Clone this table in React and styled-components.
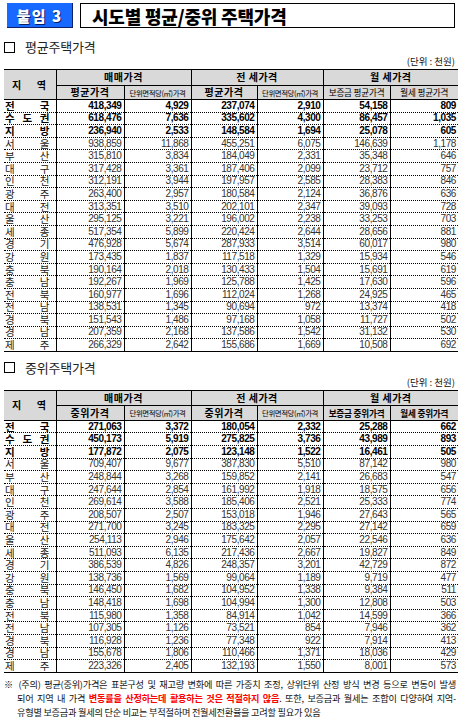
import styled, { createGlobalStyle } from "styled-components";

const GlobalStyle = createGlobalStyle`
  html, body { margin: 0; padding: 0; background: #fff; }
  body {
    font-family: "Liberation Sans", "Noto Sans CJK KR", sans-serif;
    color: #000;
  }
`;

const avgRows = [
  ["전국", "418,349", "4,929", "237,074", "2,910", "54,158", "809"],
  ["수도권", "618,476", "7,636", "335,602", "4,300", "86,457", "1,035"],
  ["지방", "236,940", "2,533", "148,584", "1,694", "25,078", "605"],
  ["서울", "938,859", "11,868", "455,251", "6,075", "146,639", "1,178"],
  ["부산", "315,810", "3,834", "184,049", "2,331", "35,348", "646"],
  ["대구", "317,428", "3,361", "187,406", "2,099", "23,712", "757"],
  ["인천", "312,191", "3,944", "197,957", "2,585", "28,383", "846"],
  ["광주", "263,400", "2,957", "180,584", "2,124", "36,876", "636"],
  ["대전", "313,351", "3,510", "202,101", "2,347", "39,093", "728"],
  ["울산", "295,125", "3,221", "196,002", "2,238", "33,253", "703"],
  ["세종", "517,354", "5,899", "220,424", "2,644", "28,656", "881"],
  ["경기", "476,928", "5,674", "287,933", "3,514", "60,017", "980"],
  ["강원", "173,435", "1,837", "117,518", "1,329", "15,934", "546"],
  ["충북", "190,164", "2,018", "130,433", "1,504", "15,691", "619"],
  ["충남", "192,267", "1,969", "125,788", "1,425", "17,630", "596"],
  ["전북", "160,977", "1,696", "112,024", "1,268", "24,925", "465"],
  ["전남", "138,531", "1,345", "90,694", "972", "13,374", "418"],
  ["경북", "151,543", "1,486", "97,168", "1,058", "11,727", "502"],
  ["경남", "207,359", "2,168", "137,586", "1,542", "31,132", "530"],
  ["제주", "266,329", "2,642", "155,686", "1,669", "10,508", "692"],
];

const medRows = [
  ["전국", "271,063", "3,372", "180,054", "2,332", "25,288", "662"],
  ["수도권", "450,173", "5,919", "275,825", "3,736", "43,989", "893"],
  ["지방", "177,872", "2,075", "123,148", "1,522", "16,461", "505"],
  ["서울", "709,407", "9,677", "387,830", "5,510", "87,142", "980"],
  ["부산", "248,844", "3,268", "159,852", "2,141", "26,683", "547"],
  ["대구", "247,644", "2,854", "161,992", "1,918", "18,575", "656"],
  ["인천", "269,614", "3,588", "185,406", "2,521", "25,333", "774"],
  ["광주", "208,507", "2,507", "153,018", "1,946", "27,643", "565"],
  ["대전", "271,700", "3,245", "183,325", "2,295", "27,142", "659"],
  ["울산", "254,113", "2,946", "175,642", "2,057", "22,546", "636"],
  ["세종", "511,093", "6,135", "217,436", "2,667", "19,827", "849"],
  ["경기", "386,539", "4,826", "248,357", "3,201", "42,729", "872"],
  ["강원", "138,736", "1,569", "99,064", "1,189", "9,719", "477"],
  ["충북", "146,450", "1,682", "104,952", "1,338", "9,384", "511"],
  ["충남", "148,418", "1,698", "104,994", "1,300", "12,808", "503"],
  ["전북", "115,980", "1,358", "84,914", "1,042", "14,599", "366"],
  ["전남", "107,305", "1,126", "73,521", "854", "7,946", "362"],
  ["경북", "116,928", "1,236", "77,348", "922", "7,914", "413"],
  ["경남", "155,678", "1,806", "110,466", "1,371", "18,036", "429"],
  ["제주", "223,326", "2,405", "132,193", "1,550", "8,001", "573"],
];

const colWidths = [52, 68, 67, 66, 66, 67, 68];

// layout
const Page = styled.div`
  width: 462px;
  height: 724px;
  box-sizing: border-box;
  padding: 3px 4px 0 4px;
  overflow: hidden;
`;

const TitleBar = styled.div`
  display: flex;
  gap: 7px;
  height: 25px;
  padding: 0 3px 0 3px;
`;

const Badge = styled.div`
  width: 66px;
  box-sizing: border-box;
  background: #1769ff;
  border-right: 1px solid #10206a;
  border-bottom: 1px solid #10206a;
  display: flex;
  align-items: center;
  justify-content: center;
  color: #fff;
  font-family: "Noto Sans CJK KR", sans-serif;
  font-weight: 900;
  font-size: 15px;
  letter-spacing: 1.5px;
  text-shadow: 1px 1px 0 #0b1f66;
`;

const TitleBox = styled.div`
  flex: 1;
  box-sizing: border-box;
  border: 1.5px solid #000;
  display: flex;
  align-items: center;
  padding-left: 11px;
  font-family: "Noto Sans CJK KR", sans-serif;
  font-weight: 900;
  font-size: 18px;
  letter-spacing: -0.2px;
  line-height: 1;
`;

const Section = styled.div`
  display: flex;
  align-items: center;
  gap: 10px;
  height: 16px;
  margin-top: ${(p) => p.$top}px;
`;

const Check = styled.span`
  width: 11px;
  height: 11px;
  box-sizing: border-box;
  border: 1.3px solid #000;
`;

const SectionTitle = styled.span`
  font-family: "Noto Sans CJK KR", sans-serif;
  font-size: 13px;
  color: #222;
  line-height: 16px;
  letter-spacing: -0.2px;
`;

const Unit = styled.div`
  text-align: right;
  font-family: "Noto Sans CJK KR", sans-serif;
  font-size: 9.5px;
  line-height: 11px;
  height: 11px;
  padding-right: 3px;
  margin-top: 1px;
  color: #111;
`;

const Table = styled.table`
  width: 454px;
  table-layout: fixed;
  border-collapse: collapse;
  margin-top: 2px;
  border-top: 1.5px solid #000;
  border-bottom: 1.5px solid #000;
`;

const Col = styled.col`
  width: ${(p) => p.$w}px;
`;

const HeadCell = styled.th`
  background: #d9d9d9;
  padding: 0;
  height: ${(p) => p.$h}px;
  border-bottom: 1px solid #000;
  border-left: ${(p) => (p.$first ? "none" : "1px solid #000")};
  font-family: "Noto Sans CJK KR", sans-serif;
  font-weight: ${(p) => (p.$light ? 400 : 700)};
  font-size: ${(p) => p.$size || 10}px;
  letter-spacing: ${(p) => p.$ls ?? 0.5}px;
  line-height: 1;
  white-space: nowrap;
  overflow: hidden;
  text-align: center;
  vertical-align: middle;
`;

const Spread = styled.div`
  display: flex;
  align-items: center;
  justify-content: space-between;
  height: ${(p) => p.$h || 10}px;
  padding: ${(p) => p.$pad};
  & > span {
    line-height: 10px;
  }
`;

const Row = styled.tr`
  height: 12.6px;
  & > td {
    border-bottom: 1px dotted #000;
  }
  &:last-child > td {
    border-bottom: none;
  }
`;

const RegionCell = styled.td`
  padding: 0;
  font-family: "Noto Sans CJK KR", sans-serif;
  font-size: 10.5px;
  line-height: 10px;
  font-weight: ${(p) => (p.$bold ? 700 : 400)};
  color: ${(p) => (p.$bold ? "#000" : "#222")};
`;

const NumCell = styled.td`
  padding: 0 2px 0 0;
  border-left: 1px solid #000;
  text-align: right;
  font-size: 10px;
  line-height: 10px;
  letter-spacing: -0.4px;
  font-weight: ${(p) => (p.$bold ? 700 : 400)};
  color: ${(p) => (p.$bold ? "#000" : "#333")};
`;

const Notes = styled.div`
  margin-top: 4px;
  font-family: "Noto Sans CJK KR", sans-serif;
  font-size: 9.2px;
  line-height: 14px;
  color: #111;
  letter-spacing: -0.25px;
`;

const NoteLine = styled.div`
  white-space: nowrap;
  padding-left: ${(p) => (p.$indent ? 13 : 0)}px;
  text-align: ${(p) => (p.$last ? "left" : "justify")};
  text-align-last: ${(p) => (p.$last ? "left" : "justify")};
  margin-right: 2px;
`;

const Red = styled.span`
  color: #ff0000;
  font-weight: 700;
`;

const Region = ({ name, bold }) => (
  <RegionCell $bold={bold}>
    <Spread $pad="0 6px 0 1px">
      {name.split("").map((c, i) => (
        <span key={i}>{c}</span>
      ))}
    </Spread>
  </RegionCell>
);

const PriceTable = ({ rows, kind }) => {
  const isMed = kind === "med";
  const label = isMed ? "중위가격" : "평균가격";
  return (
    <Table>
      <colgroup>
        {colWidths.map((w, i) => (
          <Col key={i} $w={w} />
        ))}
      </colgroup>
      <thead>
        <tr>
          <HeadCell rowSpan={2} $first>
            <Spread $pad="0 9px 0 8px" $h={20}>
              <span>지</span>
              <span>역</span>
            </Spread>
          </HeadCell>
          <HeadCell colSpan={2} $h={14.5}>
            매매가격
          </HeadCell>
          <HeadCell colSpan={2} $h={14.5}>
            전 세가격
          </HeadCell>
          <HeadCell colSpan={2} $h={14.5}>
            월 세가격
          </HeadCell>
        </tr>
        <tr>
          <HeadCell $h={13.5}>{label}</HeadCell>
          <HeadCell $h={13.5} $light $size={7.4} $ls={-0.4}>
            단위면적당(㎡)가격
          </HeadCell>
          <HeadCell $h={13.5}>{label}</HeadCell>
          <HeadCell $h={13.5} $light $size={7.4} $ls={-0.4}>
            단위면적당(㎡)가격
          </HeadCell>
          <HeadCell $h={13.5} $light={!isMed} $size={8.6} $ls={-0.2}>
            보증금 {label}
          </HeadCell>
          <HeadCell $h={13.5} $light={!isMed} $size={8.6} $ls={-0.2}>
            월세 {label}
          </HeadCell>
        </tr>
      </thead>
      <tbody>
        {rows.map((r, i) => {
          const bold = i < 3;
          return (
            <Row key={r[0]}>
              <Region name={r[0]} bold={bold} />
              {r.slice(1).map((v, j) => (
                <NumCell key={j} $bold={bold}>
                  {v}
                </NumCell>
              ))}
            </Row>
          );
        })}
      </tbody>
    </Table>
  );
};

export default function App() {
  return (
    <Page>
      <GlobalStyle />
      <TitleBar>
        <Badge>붙임 3</Badge>
        <TitleBox>시도별 평균/중위 주택가격</TitleBox>
      </TitleBar>

      <Section $top={11}>
        <Check />
        <SectionTitle>평균주택가격</SectionTitle>
      </Section>
      <Unit>(단위 : 천원)</Unit>
      <PriceTable rows={avgRows} kind="avg" />

      <Section $top={8}>
        <Check />
        <SectionTitle>중위주택가격</SectionTitle>
      </Section>
      <Unit>(단위 : 천원)</Unit>
      <PriceTable rows={medRows} kind="med" />

      <Notes>
        <NoteLine>
          ※ (주의) 평균(중위)가격은 표본구성 및 재고량 변화에 따른 가중치 조정, 상위단위 산정 방식 변경 등으로 변동이 발생
        </NoteLine>
        <NoteLine $indent>
          되어 지역 내 가격 <Red>변동률을 산정하는데 활용하는 것은 적절하지 않음</Red>. 또한, 보증금과 월세는 조합이 다양하여 지역-
        </NoteLine>
        <NoteLine $indent $last>
          유형별 보증금과 월세의 단순 비교는 부적절하며 전월세전환율을 고려할 필요가 있음
        </NoteLine>
      </Notes>
    </Page>
  );
}
